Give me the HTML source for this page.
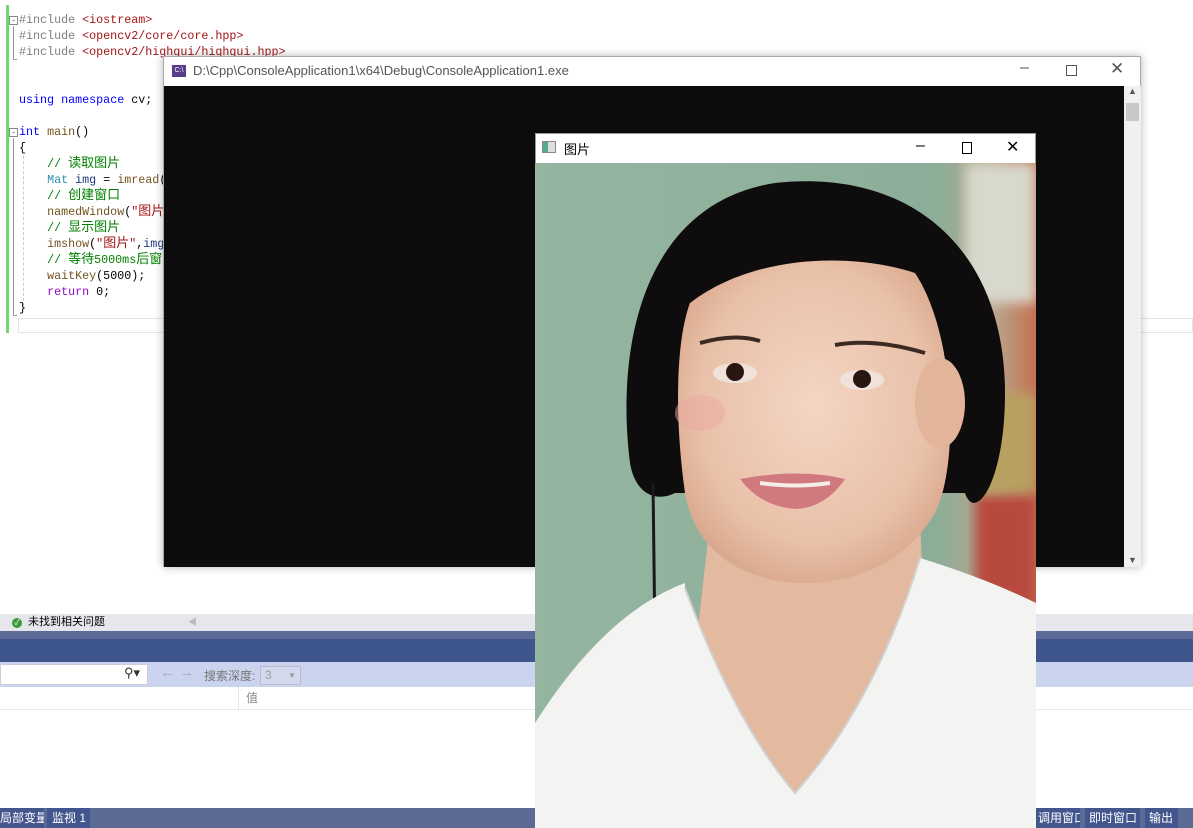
<!DOCTYPE html>
<html><head><meta charset="utf-8"><style>
*{margin:0;padding:0;box-sizing:border-box}
body{width:1193px;height:828px;overflow:hidden;background:#fff;position:relative;font-family:"Liberation Sans","Noto Sans CJK SC",sans-serif}
.code{position:absolute;left:19px;top:12px;font-family:"Liberation Mono","Noto Sans CJK SC",monospace;font-size:11.7px;line-height:16px;white-space:pre;color:#000}
.code .z{font-size:13px}
.g{color:#808080}.r{color:#a31515}.b{color:#0000ff}.c{color:#008000}.t{color:#2b91af}.f{color:#74531f}.p{color:#8f08c4}.v{color:#1f377f}
.abs{position:absolute}
.tab{position:absolute;top:0;height:20px;background:#42558c;white-space:nowrap;overflow:hidden;font-size:12px}
</style></head><body>
<div class="abs" style="left:6px;top:5px;width:3px;height:328px;background:#6fd86f"></div>
<div class="abs" style="left:9px;top:16px;width:9px;height:9px;border:1px solid #888;font-size:9px;line-height:6px;text-align:center;color:#555">-</div>
<div class="abs" style="left:9px;top:128px;width:9px;height:9px;border:1px solid #888;font-size:9px;line-height:6px;text-align:center;color:#555">-</div>
<div class="abs" style="left:13px;top:26px;width:4px;height:34px;border-left:1px solid #999;border-bottom:1px solid #999"></div>
<div class="abs" style="left:13px;top:138px;width:4px;height:178px;border-left:1px solid #999;border-bottom:1px solid #999"></div>
<div class="abs" style="left:23px;top:156px;height:150px;border-left:1px dashed #ccc"></div>
<div class="abs" style="left:18px;top:318px;width:1175px;height:15px;border:1px solid #e4e4ea"></div>
<div class="code"><span class="g">#include</span> <span class="r">&lt;iostream&gt;</span>
<span class="g">#include</span> <span class="r">&lt;opencv2/core/core.hpp&gt;</span>
<span class="g">#include</span> <span class="r">&lt;opencv2/highgui/highgui.hpp&gt;</span>


<span class="b">using</span> <span class="b">namespace</span> cv;

<span class="b">int</span> <span class="f">main</span>()
{
    <span class="c">// <span class="z">读取图片</span></span>
    <span class="t">Mat</span> <span class="v">img</span> = <span class="f">imread</span>(
    <span class="c">// <span class="z">创建窗口</span></span>
    <span class="f">namedWindow</span>(<span class="r">"<span class="z">图片</span></span>
    <span class="c">// <span class="z">显示图片</span></span>
    <span class="f">imshow</span>(<span class="r">"<span class="z">图片</span>"</span>,<span class="v">img</span>
    <span class="c">// <span class="z">等待</span>5000ms<span class="z">后窗</span></span>
    <span class="f">waitKey</span>(5000);
    <span class="p">return</span> 0;
}</div>

<div class="abs" style="left:0;top:614px;width:1193px;height:17px;background:#e6e7ed;font-size:11px;line-height:17px">
<span style="position:absolute;left:12px;top:4px;width:10px;height:10px;border-radius:50%;background:#3a9a3a;color:#fff;font-size:8px;line-height:10px;text-align:center">✓</span>
<span style="position:absolute;left:28px">未找到相关问题</span>
<span style="position:absolute;left:188px;color:#bbb;font-size:9px">◀</span></div>
<div class="abs" style="left:0;top:631px;width:1193px;height:8px;background:#5c6a96"></div>
<div class="abs" style="left:0;top:639px;width:1193px;height:23px;background:#3f568c"></div>
<div class="abs" style="left:0;top:662px;width:1193px;height:25px;background:#cad4ee;font-size:12px;color:#777">
<div style="position:absolute;left:0;top:2px;width:148px;height:21px;background:#fff;border:1px solid #ccd"></div>
<span style="position:absolute;left:124px;top:3px;color:#333;font-size:13px">⚲▾</span>
<span style="position:absolute;left:160px;top:2px;color:#aaa;font-size:15px">← →</span>
<span style="position:absolute;left:204px;top:5px">搜索深度:</span>
<div style="position:absolute;left:260px;top:4px;width:41px;height:19px;border:1px solid #bbc;background:#d3daee;padding-left:4px;line-height:17px;color:#999">3<span style="position:absolute;right:4px;font-size:8px">▼</span></div>
</div>
<div class="abs" style="left:0;top:687px;width:1193px;height:23px;border-bottom:1px solid #e6e6f0;font-size:12px;color:#888"><div style="position:absolute;left:238px;top:0;height:22px;border-left:1px solid #e6e6f0;padding-left:7px;line-height:22px">值</div></div>
<div class="abs" style="left:0;top:808px;width:1193px;height:20px;background:#5c6a96;color:#fff;line-height:20px;overflow:hidden">
<div class="tab" style="left:0;width:44px">局部变量</div>
<div class="tab" style="left:47px;width:43px;padding-left:5px">监视 1</div>
<div class="tab" style="left:1036px;width:44px;padding-left:2px">调用窗口</div>
<div class="tab" style="left:1085px;width:55px;padding-left:4px">即时窗口</div>
<div class="tab" style="left:1145px;width:33px;padding-left:4px">输出</div></div>

<div class="abs" style="left:163px;top:56px;width:978px;height:511px;background:#fff;border:1px solid #aaa;box-shadow:0 0 8px rgba(0,0,0,.3)">
<div style="position:absolute;left:8px;top:8px;width:14px;height:12px;background:#5a3d8a;color:#fff;font-size:7px;line-height:12px;text-align:center">C:\</div>
<div style="position:absolute;left:29px;top:6px;font-size:13px;color:#555">D:\Cpp\ConsoleApplication1\x64\Debug\ConsoleApplication1.exe</div>
<div style="position:absolute;left:856px;top:2px;font-size:16px;color:#555">–</div>
<div style="position:absolute;left:902px;top:8px;width:11px;height:11px;border:1px solid #555"></div>
<div style="position:absolute;left:946px;top:2px;font-size:17px;color:#555">✕</div>
<div style="position:absolute;left:0;top:29px;width:960px;height:481px;background:#0c0c0c"></div>
<div style="position:absolute;left:960px;top:29px;width:17px;height:481px;background:#f0f0f0"><div style="position:absolute;left:2px;top:17px;width:13px;height:18px;background:#c8c8c8"></div><div style="position:absolute;left:4px;top:0;font-size:9px;color:#555">▲</div><div style="position:absolute;left:4px;bottom:2px;font-size:9px;color:#555">▼</div></div>
</div>

<div class="abs" style="left:535px;top:133px;width:501px;height:695px;background:#fff;border:1px solid #999">
<div style="position:absolute;left:6px;top:7px;width:14px;height:12px;border:1px solid #888;background:linear-gradient(90deg,#5a8 40%,#ddd 40%)"></div>
<div style="position:absolute;left:28px;top:5px;font-size:13px">图片</div>
<div style="position:absolute;left:380px;top:3px;font-size:16px">–</div>
<div style="position:absolute;left:426px;top:8px;width:10px;height:12px;border:1px solid #000"></div>
<div style="position:absolute;left:470px;top:3px;font-size:16px">✕</div>
<svg style="position:absolute;left:-1px;top:29px" width="501" height="665" viewBox="0 0 501 665">
<defs>
<linearGradient id="bg" x1="0" x2="1"><stop offset="0" stop-color="#95b5a0"/><stop offset="0.8" stop-color="#8cae99"/><stop offset="0.92" stop-color="#b9a48c"/><stop offset="1" stop-color="#c47050"/></linearGradient>
<filter id="bl"><feGaussianBlur stdDeviation="6"/></filter>
<radialGradient id="sk" cx="0.5" cy="0.45" r="0.6"><stop offset="0" stop-color="#f3d6c4"/><stop offset="0.7" stop-color="#e9c1a9"/><stop offset="1" stop-color="#d7a58a"/></radialGradient>
</defs>
<rect width="501" height="665" fill="url(#bg)"/>
<rect x="430" y="0" width="71" height="140" fill="#d8d8cc" filter="url(#bl)"/>
<rect x="440" y="330" width="61" height="120" fill="#b84a3c" filter="url(#bl)"/>
<rect x="430" y="230" width="71" height="100" fill="#b8a060" filter="url(#bl)"/>
<path d="M95,300 C80,180 110,40 240,20 C380,5 470,90 470,230 C470,320 440,360 430,330 L140,330 C120,340 100,330 95,300Z" fill="#0e0c0c"/>
<path d="M118,320 L122,640" stroke="#1a1a1a" stroke-width="3"/>
<path d="M175,360 L140,665 L400,665 L385,360Z" fill="#e3b9a0"/>
<path d="M155,140 C220,90 320,90 380,110 C420,170 425,300 400,350 C370,400 320,420 270,420 C210,420 160,390 150,330 C140,260 140,180 155,140Z" fill="url(#sk)"/>
<ellipse cx="405" cy="240" rx="25" ry="45" fill="#e2b59a"/>
<path d="M0,560 Q70,450 150,420 L150,425 Q200,560 260,630 Q340,540 385,395 Q450,415 501,440 L501,665 L0,665Z" fill="#f3f3f1"/>
<path d="M150,425 Q200,560 260,630 Q340,540 385,395" fill="none" stroke="#d0d0d0" stroke-width="2"/>
<path d="M165,180 Q200,170 225,178" stroke="#3a2a22" stroke-width="4" fill="none"/>
<path d="M300,182 Q340,175 390,190" stroke="#3a2a22" stroke-width="4" fill="none"/>
<ellipse cx="200" cy="210" rx="22" ry="10" fill="#f0e2da"/><circle cx="200" cy="209" r="9" fill="#2a1610"/>
<ellipse cx="327" cy="217" rx="22" ry="10" fill="#f0e2da"/><circle cx="327" cy="216" r="9" fill="#2a1610"/>
<ellipse cx="165" cy="250" rx="25" ry="18" fill="#eba8a0" opacity=".5"/>
<path d="M205,316 Q265,305 310,316 Q290,345 260,346 Q225,343 205,316Z" fill="#d07a80"/>
<path d="M225,320 Q260,325 295,320" stroke="#f5eee8" stroke-width="4" fill="none"/>
</svg>
</div>
</body></html>
